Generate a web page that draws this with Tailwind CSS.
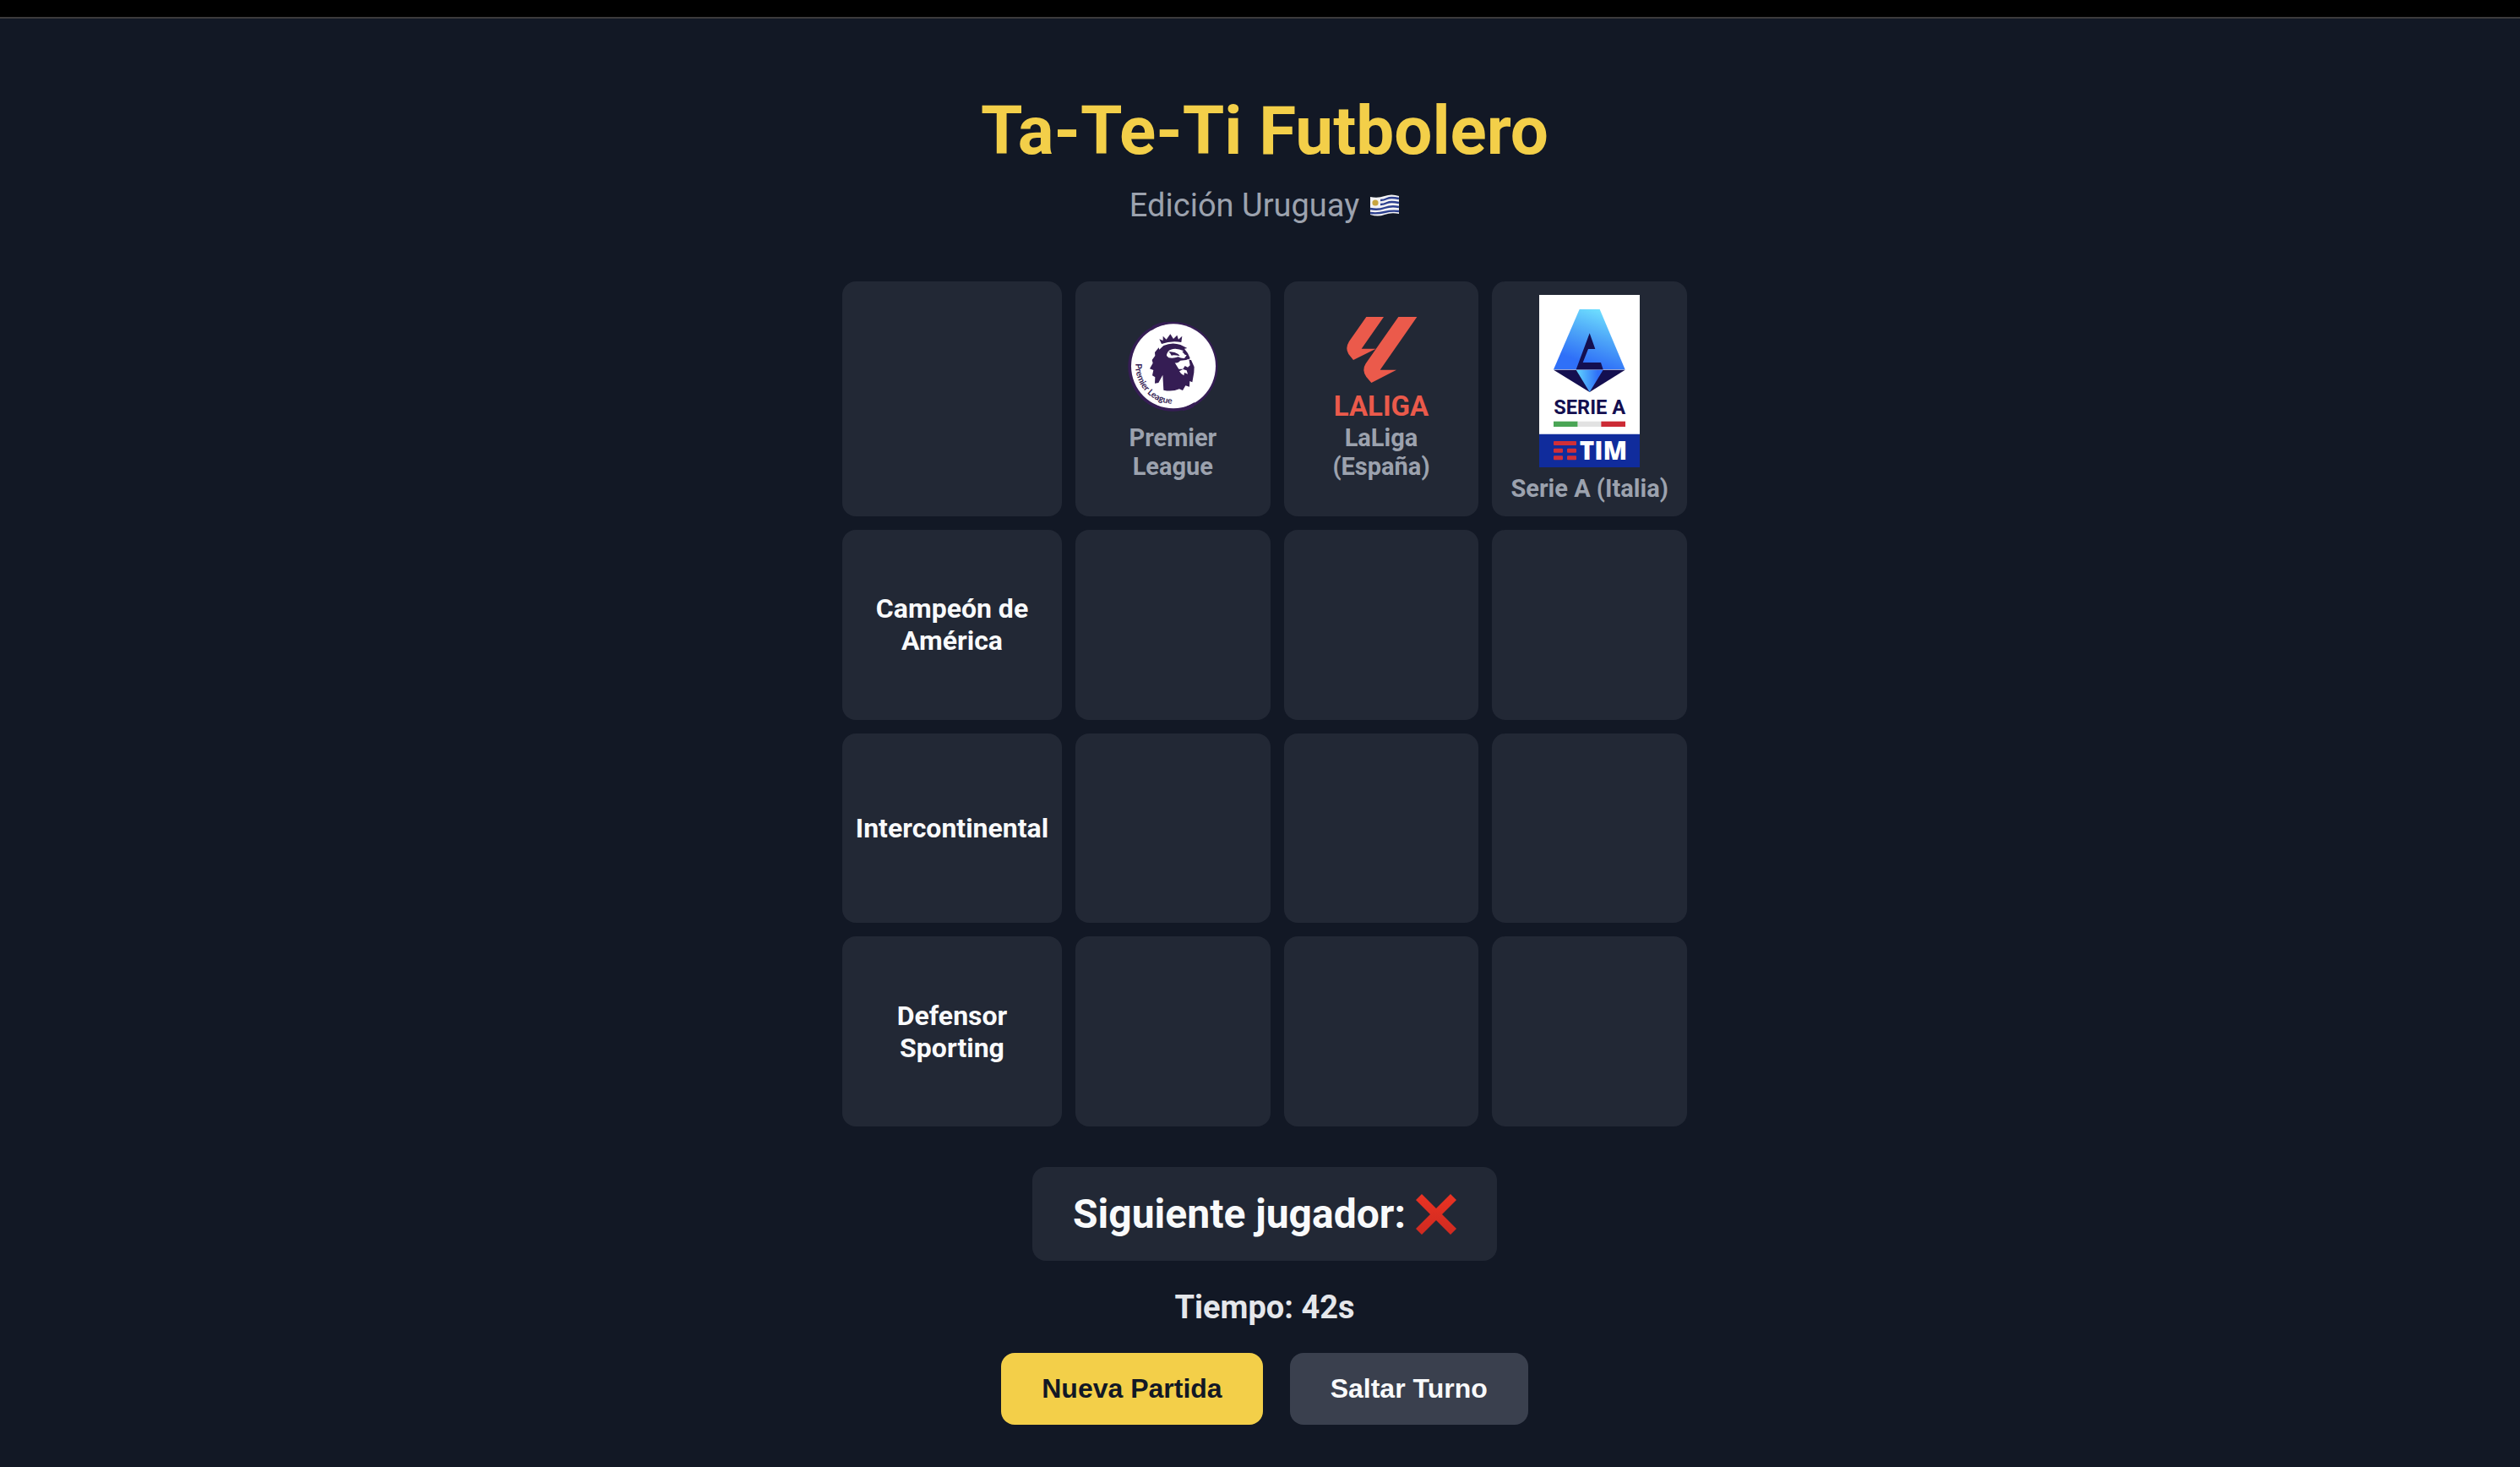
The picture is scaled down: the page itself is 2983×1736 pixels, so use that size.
<!DOCTYPE html>
<html lang="es">
<head>
<meta charset="utf-8">
<meta name="viewport" content="width=device-width, initial-scale=1">
<title>Ta-Te-Ti Futbolero</title>
<script src="https://cdn.jsdelivr.net/npm/@tailwindcss/browser@4"></script>
</head>
<body class="min-h-screen bg-[#121825] font-['Roboto',sans-serif] text-[#f9fafb]">
<div class="h-[22px] border-b-2 border-[#3c3a3c] bg-black"></div>
<main class="flex flex-col items-center pt-[85px] pb-12 pl-[11px]">
  <header class="mb-[66px] flex flex-col items-center gap-4 text-center">
    <h1 class="text-[80px] leading-[96px] font-bold text-[#f3cf49]">Ta-Te-Ti Futbolero</h1>
    <p class="flex items-center gap-3 text-[38px] leading-[48px] text-[#9ca2ae]">Edición Uruguay
      <svg class="h-[26px] w-[36px]" viewBox="0 0 36 26" role="img" aria-label="Uruguay">
        <path d="M1 3Q10 5 18 2T35 2V23Q26 21 18 24T1 24Z" fill="#f2f2f4"/>
        <g fill="none" stroke="#2c3f8f" stroke-width="2.4">
          <path d="M13 7Q17 7 21 5T35 5"/>
          <path d="M13 12Q17 12 21 10T35 10"/>
          <path d="M1 17Q10 19 18 16T35 15"/>
          <path d="M1 22Q10 23 18 21T35 20"/>
        </g>
        <circle cx="7" cy="10" r="3.6" fill="#c9a640"/>
      </svg>
    </p>
  </header>

  <section aria-label="Tablero" class="grid w-full max-w-[1000px] grid-cols-[260px_repeat(3,1fr)] grid-rows-[278px_repeat(3,minmax(0,1fr))] gap-4 aspect-square">
    <div class="rounded-2xl bg-[#222835]"></div>
    <div class="flex flex-col items-center justify-center gap-2 rounded-2xl bg-[#222835] px-8 text-center text-[29px] leading-[34px] font-bold text-[#9ca2ae]">
      <svg class="size-[118px]" viewBox="87 42 354 354" aria-hidden="true">
        <circle cx="265" cy="218" r="159" fill="#351d54"/>
        <circle cx="267" cy="217" r="150" fill="#fff"/>
        <path d="M190 90L192 74Q215 62 240 59L238 69Q210 74 190 90Z" fill="#351d54"/>
        <path d="M300 365Q325 356 342 345L339 362Q320 372 300 376Z" fill="#351d54"/>
        <path d="M225 138L217 121L230 126L230 110L242 122L256 103L267 120L280 107L285 122L298 110L295 132Q258 126 225 138Z" fill="#351d54"/>
        <path d="M232 144Q262 130 292 141L316 153L306 155L318 171L326 188L322 194L330 195L341 220L340 240L334 274L325 270L324 290L310 286L300 303L288 298Q262 309 232 302L229 248L214 276L201 278L202 256L192 250L196 231L183 226L194 206L191 195L202 180L201 168L215 151L217 158Z" fill="#351d54"/>
        <path d="M243 180Q244 163 258 158Q278 151 304 163L298 165L308 176L314 178L306 189Q294 190 284 184Q266 191 250 187Z" fill="#fff"/>
        <path d="M250 166Q270 164 284 174L290 181Q268 176 260 179Q258 172 250 166Z" fill="#351d54"/>
        <path d="M272 205Q282 208 292 197L312 195L322 191L326 214L318 221L308 216L301 227L286 227Z" fill="#fff"/>
        <path d="M288 235L301 228L314 232L318 245L306 240L304 250L294 243Z" fill="#fff"/>
        <path id="pl-arc" d="M133 208A134 134 0 0 0 285 349" fill="none"/>
        <text class="font-['Lato',sans-serif] text-[31px] font-bold" fill="#351d54"><textPath href="#pl-arc">Premier League</textPath></text>
      </svg>
      <span>Premier League</span>
    </div>
    <div class="flex flex-col items-center justify-center gap-2 rounded-2xl bg-[#222835] px-8 text-center text-[29px] leading-[34px] font-bold text-[#9ca2ae]">
      <svg class="size-[118px] overflow-visible" viewBox="171 100 354 354" aria-hidden="true">
        <g fill="#eb5a4b">
          <path d="M295 100H357L278 213H329L249 253L232 232Q219 211 234 187Z"/>
          <path d="M409 100H475L344 288H402L313 334L295 313Q278 289 293 266Z"/>
        </g>
        <text x="348" y="452" text-anchor="middle" class="font-['Roboto',sans-serif] text-[99px] font-bold" fill="#eb5a4b">LALIGA</text>
      </svg>
      <span>LaLiga (España)</span>
    </div>
    <div class="flex flex-col items-center justify-center gap-2 rounded-2xl bg-[#222835] text-center text-[29px] leading-[34px] font-bold text-[#9ca2ae]">
      <svg class="h-[204px] w-[119px]" viewBox="156 69 357 612" aria-hidden="true">
        <defs>
          <linearGradient id="sa-top" x1=".7" y1="0" x2=".3" y2="1"><stop offset="0" stop-color="#70e2ff"/><stop offset=".45" stop-color="#4ca3f8"/><stop offset=".85" stop-color="#2f70f8"/></linearGradient>
          <linearGradient id="sa-tip"><stop offset="0" stop-color="#62d6ff"/><stop offset=".8" stop-color="#2f70f8"/></linearGradient>
        </defs>
        <path d="M156 69H513V681H156Z" fill="#fff"/>
        <path d="M156 563H513V681H156Z" fill="#102c9c"/>
        <path d="M299 120H371L461 334H207Z" fill="url(#sa-top)"/>
        <path d="M207 335H461L335 414Z" fill="#140f50"/>
        <path d="M287 335H383L335 414Z" fill="url(#sa-tip)"/>
        <path d="M335 205L355 261H330L311 309H375L383 334H287Z" fill="#140f50"/>
        <text x="335" y="492" text-anchor="middle" class="font-['Roboto',sans-serif] text-[71px] font-bold" fill="#140f50">SERIE A</text>
        <path d="M207 518H293V537H207Z" fill="#4aa555"/>
        <path d="M293 518H376V537H293Z" fill="#e2e2e2"/>
        <path d="M376 518H462V537H376Z" fill="#cc2b35"/>
        <g fill="#d12f37">
          <rect x="207" y="588" width="81" height="15" rx="3"/>
          <rect x="207" y="614" width="33" height="15" rx="3"/><rect x="255" y="614" width="33" height="15" rx="3"/>
          <rect x="207" y="640" width="33" height="15" rx="3"/><rect x="255" y="640" width="33" height="15" rx="3"/>
        </g>
        <text x="384" y="655" text-anchor="middle" class="font-['Open_Sans',sans-serif] text-[89px] font-extrabold" fill="#fff">TIM</text>
      </svg>
      <span>Serie A (Italia)</span>
    </div>

    <div class="flex items-center justify-center rounded-2xl bg-[#222835] px-4 text-center text-[32px] leading-[38px] font-bold">Campeón de América</div>
    <button type="button" aria-label="Campeón de América, Premier League" class="rounded-2xl bg-[#222835]"></button>
    <button type="button" aria-label="Campeón de América, LaLiga" class="rounded-2xl bg-[#222835]"></button>
    <button type="button" aria-label="Campeón de América, Serie A" class="rounded-2xl bg-[#222835]"></button>

    <div class="flex items-center justify-center rounded-2xl bg-[#222835] px-4 text-center text-[32px] leading-[38px] font-bold">Intercontinental</div>
    <button type="button" aria-label="Intercontinental, Premier League" class="rounded-2xl bg-[#222835]"></button>
    <button type="button" aria-label="Intercontinental, LaLiga" class="rounded-2xl bg-[#222835]"></button>
    <button type="button" aria-label="Intercontinental, Serie A" class="rounded-2xl bg-[#222835]"></button>

    <div class="flex items-center justify-center rounded-2xl bg-[#222835] px-4 text-center text-[32px] leading-[38px] font-bold">Defensor Sporting</div>
    <button type="button" aria-label="Defensor Sporting, Premier League" class="rounded-2xl bg-[#222835]"></button>
    <button type="button" aria-label="Defensor Sporting, LaLiga" class="rounded-2xl bg-[#222835]"></button>
    <button type="button" aria-label="Defensor Sporting, Serie A" class="rounded-2xl bg-[#222835]"></button>
  </section>

  <p class="mt-12 flex items-center gap-3 rounded-2xl bg-[#222835] px-12 py-7 text-[48px] leading-[55px] font-bold">Siguiente jugador:
    <svg class="size-12" viewBox="1 1 48 48" role="img" aria-label="X">
      <defs><linearGradient id="cross" x1="0" y1="0" x2="0" y2="1"><stop offset="0" stop-color="#ea3323"/><stop offset="1" stop-color="#cf2a20"/></linearGradient></defs>
      <path d="M8 1L25 18L42 1L49 8L32 25L49 42L42 49L25 32L8 49L1 42L18 25L1 8Z" fill="url(#cross)"/>
    </svg>
  </p>
  <p class="mt-8 text-[38px] leading-[46px] font-bold text-[#e5e7eb]">Tiempo: 42s</p>
  <div class="mt-[31px] flex gap-8 font-['Liberation_Sans',Arial,sans-serif] text-[32px] leading-[37px] font-bold">
    <button type="button" class="rounded-2xl bg-[#f3cf49] px-12 py-6 text-[#121825]">Nueva Partida</button>
    <button type="button" class="rounded-2xl bg-[#3a404e] px-12 py-6">Saltar Turno</button>
  </div>
</main>
</body>
</html>
